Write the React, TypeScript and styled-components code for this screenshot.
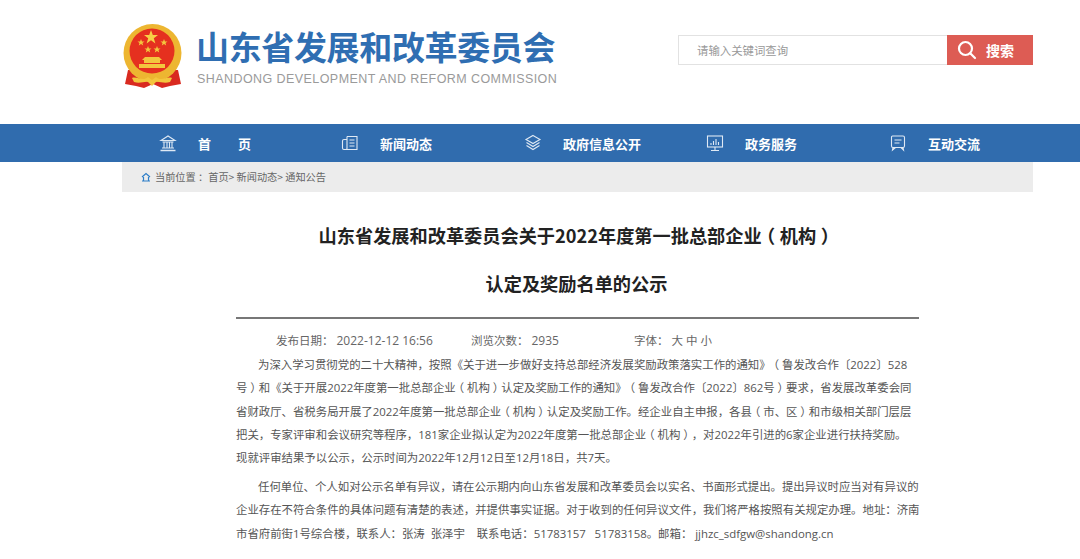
import React from 'react';
import styled, { createGlobalStyle } from 'styled-components';

const GlobalStyle = createGlobalStyle`
  html, body {
    margin: 0;
    padding: 0;
    background: #fff;
    overflow: hidden;
  }
  body {
    font-family: "Liberation Sans", "Noto Sans CJK SC", sans-serif;
  }
`;

const Page = styled.div`
  width: 1080px;
  height: 559px;
  overflow: hidden;
`;

// --- Header ---
const Header = styled.header`
  height: 124px;
  padding: 0 47px 0 122px;
  display: flex;
  justify-content: space-between;
  box-sizing: border-box;
`;

const Brand = styled.div`
  display: flex;
  align-items: flex-start;
  padding-top: 24px;
  gap: 13px;
`;

const BrandText = styled.div`
  display: flex;
  flex-direction: column;
`;

const BrandName = styled.div`
  font-family: "Noto Sans CJK SC", sans-serif;
  font-size: 33px;
  font-weight: 700;
  line-height: 44px;
  letter-spacing: -0.35px;
  margin-left: -1px;
  color: #2f6eb2;
  white-space: nowrap;
`;

const BrandSub = styled.div`
  font-size: 12.5px;
  line-height: 16px;
  margin-top: 3px;
  letter-spacing: 0.43px;
  color: #9a9a9a;
  white-space: nowrap;
`;

const Search = styled.form`
  display: flex;
  margin-top: 35px;
  height: 30px;
`;

const SearchInput = styled.div`
  width: 269px;
  box-sizing: border-box;
  border: 1px solid #e2e2e2;
  border-right: none;
  padding-left: 18px;
  font-family: "Noto Sans CJK SC", sans-serif;
  font-size: 11.4px;
  line-height: 28px;
  color: #999;
`;

const SearchButton = styled.button`
  width: 86px;
  border: none;
  padding: 0 0 0 10px;
  background: #dd5c54;
  color: #fff;
  display: flex;
  align-items: center;
  gap: 9px;
  font-family: "Noto Sans CJK SC", sans-serif;
  font-size: 14px;
  font-weight: 700;
`;

// --- Nav ---
const NavBar = styled.nav`
  height: 38px;
  background: #306cae;
  padding-left: 159px;
  display: flex;
  align-items: center;
`;

const NavItem = styled.a<{ $width: number }>`
  width: ${(p) => p.$width}px;
  display: flex;
  align-items: center;
  gap: 21px;
  color: #fff;
  font-family: "Noto Sans CJK SC", sans-serif;
  font-size: 13px;
  font-weight: 700;
  white-space: nowrap;
  flex-shrink: 0;
`;

const NavLabel = styled.span<{ $spread?: boolean }>`
  letter-spacing: ${(p) => (p.$spread ? '27px' : '0')};
`;

const NavIcon = styled.svg`
  width: 18px;
  height: 18px;
  fill: none;
  stroke: #dfe9f4;
  stroke-width: 1.1;
  flex-shrink: 0;
`;

// --- Content ---
const Main = styled.main`
  width: 911px;
  margin-left: 122px;
`;

const Crumbs = styled.div`
  height: 30px;
  box-sizing: border-box;
  padding: 0 0 1px 19px;
  background: #ececec;
  display: flex;
  align-items: center;
  gap: 4px;
  font-family: "Noto Sans CJK SC", sans-serif;
  font-size: 10.2px;
  color: #666;
`;

const CrumbIcon = styled.svg`
  width: 10px;
  height: 10px;
  fill: none;
  stroke: #2f7fc8;
  stroke-width: 1.2;
`;

const Title = styled.h1`
  margin: 19px 0 0;
  padding-right: 2px;
  text-align: center;
  font-family: "Noto Sans CJK SC", sans-serif;
  font-size: 18.2px;
  font-weight: 700;
  line-height: 48px;
  color: #222;
  text-spacing-trim: space-all;
`;

const Article = styled.article`
  width: 683px;
  margin: 10px 0 0 114px;
  border-top: 2px solid #777;
`;

const Meta = styled.div`
  height: 34px;
  box-sizing: border-box;
  padding: 8px 0 0 40px;
  display: flex;
  align-items: center;
  font-family: "Open Sans", "Noto Sans CJK SC", sans-serif;
  font-size: 11.5px;
  color: #666;
  white-space: pre;
`;

const MetaItem = styled.span<{ $width: number }>`
  width: ${(p) => p.$width}px;
  flex-shrink: 0;
`;

const MetaValue = styled.span`
  font-size: 12px;
`;

const Para = styled.p`
  margin: 0 0 5.7px;
  font-family: "Open Sans", "Noto Sans CJK SC", sans-serif;
  font-size: 11.4px;
  line-height: 23.3px;
  text-indent: 22px;
  color: #555;
  white-space: pre;
  text-spacing-trim: space-all;
`;

// Full-width brackets sit centred in their cell in the reference:
// half-width glyph with even padding keeps the cell at 1em
const Bracket = styled.span`
  font-feature-settings: "halt";
  padding: 0 0.25em;
`;

const withBrackets = (text: string) =>
  text.split(/([（）])/).map((part, i) =>
    part === '（' || part === '）' ? <Bracket key={i}>{part}</Bracket> : part
  );

const Emblem = () => (
  <svg width="62" height="66" viewBox="0 0 62 66">
    <path d="M6 46 L3 60 L14 62 L22 64 L31 60 L40 64 L48 62 L59 60 L56 46 Z" fill="#d92a20" />
    <circle cx="30.5" cy="29" r="29" fill="#edb631" />
    <circle cx="30" cy="27" r="22.5" fill="#e5301f" />
    <path d="M29 6 L30.8 11 L36 11 L31.8 14.2 L33.4 19.5 L29 16.3 L24.6 19.5 L26.2 14.2 L22 11 L27.2 11 Z" fill="#f7d046" />
    <g fill="#f3c63e">
      <path d="M19 15 L20 17.4 L22.5 17.4 L20.5 19 L21.2 21.5 L19 20 L16.8 21.5 L17.5 19 L15.5 17.4 L18 17.4 Z" />
      <path d="M42 15 L43 17.4 L45.5 17.4 L43.5 19 L44.2 21.5 L42 20 L39.8 21.5 L40.5 19 L38.5 17.4 L41 17.4 Z" />
      <path d="M26 22 L27 24.4 L29.5 24.4 L27.5 26 L28.2 28.5 L26 27 L23.8 28.5 L24.5 26 L22.5 24.4 L25 24.4 Z" />
      <path d="M35 22 L36 24.4 L38.5 24.4 L36.5 26 L37.2 28.5 L35 27 L32.8 28.5 L33.5 26 L31.5 24.4 L34 24.4 Z" />
      <path d="M23 33 H37 L40 36 H20 Z" />
      <rect x="22" y="36" width="16" height="3" />
      <rect x="17" y="40" width="26" height="4" />
      <path d="M10 54 C15 52 21 58 26 53 L30 56 L34 53 C39 58 45 52 50 54 L48 58 C42 60 37 57 34 58 L30 62 L26 58 C23 57 18 60 12 58 Z" />
    </g>
  </svg>
);

const SearchIcon = () => (
  <svg width="20" height="20" viewBox="0 0 20 20" fill="none" stroke="#fff" strokeWidth="2.2" strokeLinecap="round">
    <circle cx="8.5" cy="8.5" r="6.5" />
    <path d="M13.5 13.5 L18 18" />
  </svg>
);

const navItems = [
  {
    label: '首页',
    spread: true,
    width: 182,
    icon: (
      <>
        <path d="M2 6.5 L9 2 L16 6.5 Z" />
        <path d="M3.5 8 H14.5 M5 8.5 V13.5 M8 8.5 V13.5 M10.5 8.5 V13.5 M13 8.5 V13.5 M3 14 H15" />
        <path d="M1.5 16.5 H16.5" strokeWidth="1.5" />
      </>
    ),
  },
  {
    label: '新闻动态',
    width: 183,
    icon: (
      <>
        <path d="M6 2.5 H16 V15.5 H3 C2 15.5 1.5 15 1.5 14 V7 C1.5 6 2 5.5 3 5.5 H6" />
        <path d="M6 2.5 V14.5 C6 15 5.5 15.5 5 15.5 M8.5 6 H13.5 M8.5 9 H13.5 M8.5 12 H13.5" />
      </>
    ),
  },
  {
    label: '政府信息公开',
    width: 182,
    icon: (
      <>
        <path d="M9 1.5 L16 5.5 L9 9.5 L2 5.5 Z" />
        <path d="M2.5 8.5 L9 12.5 L15.5 8.5 M2.5 11.5 L9 15.5 L15.5 11.5" />
      </>
    ),
  },
  {
    label: '政务服务',
    width: 183,
    icon: (
      <>
        <rect x="1.5" y="2" width="15" height="11" />
        <path d="M5 11 V9 M7.5 11 V7 M10 11 V5 M12.5 11 V8 M9 13 V16 M5 16.5 H13" />
      </>
    ),
  },
  {
    label: '互动交流',
    width: 120,
    icon: (
      <>
        <path d="M3.5 2 H14 C15 2 15.5 2.5 15.5 3.5 V12 C15.5 13 15 13.5 14 13.5 H4 C3 13.5 2.5 13 2.5 12 V3 C2.5 2.5 3 2 3.5 2 Z" />
        <path d="M5.5 6 H12.5 M5.5 9 H10.5 M4 13.5 L3.5 16 L6.5 13.5 M12 13.5 L14.5 16 L14 13.5" />
      </>
    ),
  },
];

const firstPara = [
  '为深入学习贯彻党的二十大精神，按照《关于进一步做好支持总部经济发展奖励政策落实工作的通知》（鲁发改合作〔2022〕528',
  '号）和《关于开展2022年度第一批总部企业（机构）认定及奖励工作的通知》（鲁发改合作〔2022〕862号）要求，省发展改革委会同',
  '省财政厅、省税务局开展了2022年度第一批总部企业（机构）认定及奖励工作。经企业自主申报，各县（市、区）和市级相关部门层层',
  '把关，专家评审和会议研究等程序，181家企业拟认定为2022年度第一批总部企业（机构），对2022年引进的6家企业进行扶持奖励。',
  '现就评审结果予以公示，公示时间为2022年12月12日至12月18日，共7天。',
];

const secondPara = [
  '任何单位、个人如对公示名单有异议，请在公示期内向山东省发展和改革委员会以实名、书面形式提出。提出异议时应当对有异议的',
  '企业存在不符合条件的具体问题有清楚的表述，并提供事实证据。对于收到的任何异议文件，我们将严格按照有关规定办理。地址：济南',
  '市省府前街1号综合楼，联系人：张涛  张泽宇    联系电话：51783157   51783158。邮箱： jjhzc_sdfgw@shandong.cn',
];

const renderLines = (lines: string[]) =>
  lines.map((line, i) => (
    <React.Fragment key={i}>
      {i > 0 && <br />}
      {withBrackets(line)}
    </React.Fragment>
  ));

export default function App() {
  return (
    <Page>
      <GlobalStyle />
      <Header>
        <Brand>
          <Emblem />
          <BrandText>
            <BrandName>山东省发展和改革委员会</BrandName>
            <BrandSub>SHANDONG DEVELOPMENT AND REFORM COMMISSION</BrandSub>
          </BrandText>
        </Brand>
        <Search>
          <SearchInput>请输入关键词查询</SearchInput>
          <SearchButton type="button">
            <SearchIcon />
            搜索
          </SearchButton>
        </Search>
      </Header>

      <NavBar>
        {navItems.map((item) => (
          <NavItem key={item.label} $width={item.width}>
            <NavIcon viewBox="0 0 18 18">{item.icon}</NavIcon>
            <NavLabel $spread={item.spread}>{item.label}</NavLabel>
          </NavItem>
        ))}
      </NavBar>

      <Main>
        <Crumbs>
          <CrumbIcon viewBox="0 0 10 10">
            <path d="M1 5 L5 1.5 L9 5 M2.5 5 V8.5 M7.5 5 V8.5 M1 9 H9" />
          </CrumbIcon>
          <span>当前位置 ：首页&gt; 新闻动态&gt; 通知公告</span>
        </Crumbs>

        <Title>
          {withBrackets('山东省发展和改革委员会关于2022年度第一批总部企业（机构）')}
          <br />
          认定及奖励名单的公示
        </Title>

        <Article>
          <Meta>
            <MetaItem $width={195}>
              发布日期： <MetaValue>2022-12-12 16:56</MetaValue>
            </MetaItem>
            <MetaItem $width={163}>
              浏览次数： <MetaValue>2935</MetaValue>
            </MetaItem>
            <span>字体： 大 中 小</span>
          </Meta>
          <Para>{renderLines(firstPara)}</Para>
          <Para>{renderLines(secondPara)}</Para>
        </Article>
      </Main>
    </Page>
  );
}
